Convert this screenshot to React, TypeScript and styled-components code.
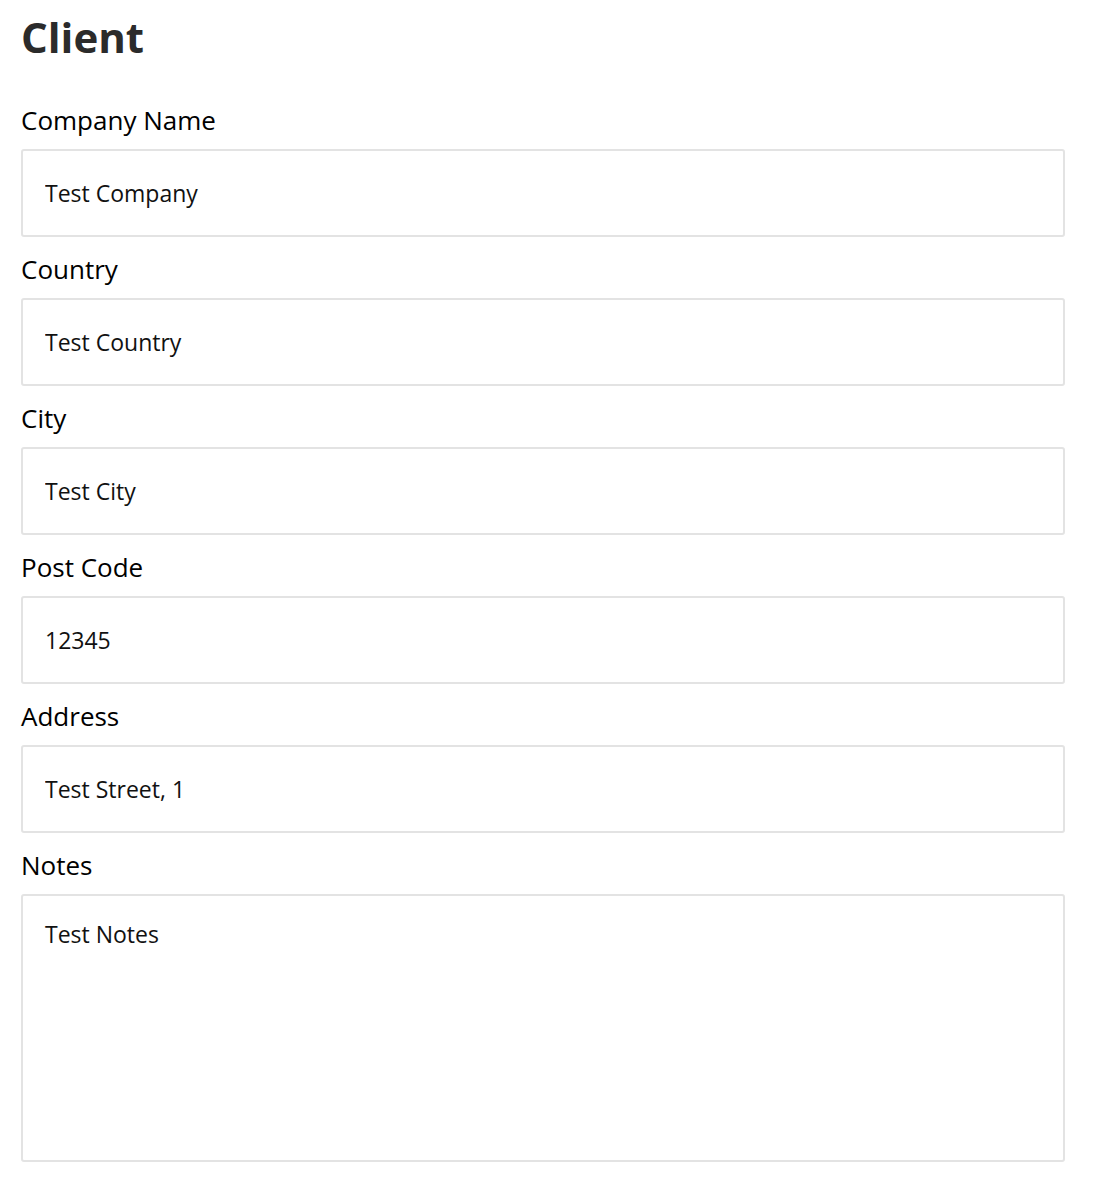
import React from "react";
import styled, { createGlobalStyle } from "styled-components";

const GlobalStyle = createGlobalStyle`
  body {
    margin: 0;
    background: #fff;
    font-family: "Open Sans", "Noto Sans", sans-serif;
  }
`;

const Page = styled.div`
  padding: 10px 28px 0 21px;
`;

const Title = styled.h1`
  margin: 0;
  font-size: 42px;
  line-height: 54px;
  font-weight: 700;
  color: #2b2b2b;
`;

const Form = styled.form`
  display: flex;
  flex-direction: column;
  margin-top: 39px;
`;

const Field = styled.label`
  display: flex;
  flex-direction: column;
  gap: 12px;
  margin-bottom: 15px;
`;

const LabelText = styled.span`
  font-size: 26px;
  line-height: 34px;
  color: #000;
`;

const inputBase = `
  box-sizing: border-box;
  width: 100%;
  border: 2px solid #e3e3e3;
  border-radius: 3px;
  background: #fff;
  font-family: "Open Sans", "Noto Sans", sans-serif;
  font-size: 23px;
  color: #111;
  padding: 0 22px;
  outline: none;
`;

const Input = styled.input`
  ${inputBase}
  height: 88px;
`;

const TextArea = styled.textarea`
  ${inputBase}
  height: 268px;
  padding-top: 24px;
  line-height: 28px;
  resize: none;
`;

interface IFieldDef {
  label: string;
  value: string;
}

const fields: IFieldDef[] = [
  { label: "Company Name", value: "Test Company" },
  { label: "Country", value: "Test Country" },
  { label: "City", value: "Test City" },
  { label: "Post Code", value: "12345" },
  { label: "Address", value: "Test Street, 1" },
];

const App: React.FC = () => {
  return (
    <>
      <GlobalStyle />
      <Page>
        <Title>Client</Title>
        <Form onSubmit={e => e.preventDefault()}>
          {fields.map(f => (
            <Field key={f.label}>
              <LabelText>{f.label}</LabelText>
              <Input defaultValue={f.value} />
            </Field>
          ))}
          <Field>
            <LabelText>Notes</LabelText>
            <TextArea defaultValue="Test Notes" />
          </Field>
        </Form>
      </Page>
    </>
  );
};

export default App;
